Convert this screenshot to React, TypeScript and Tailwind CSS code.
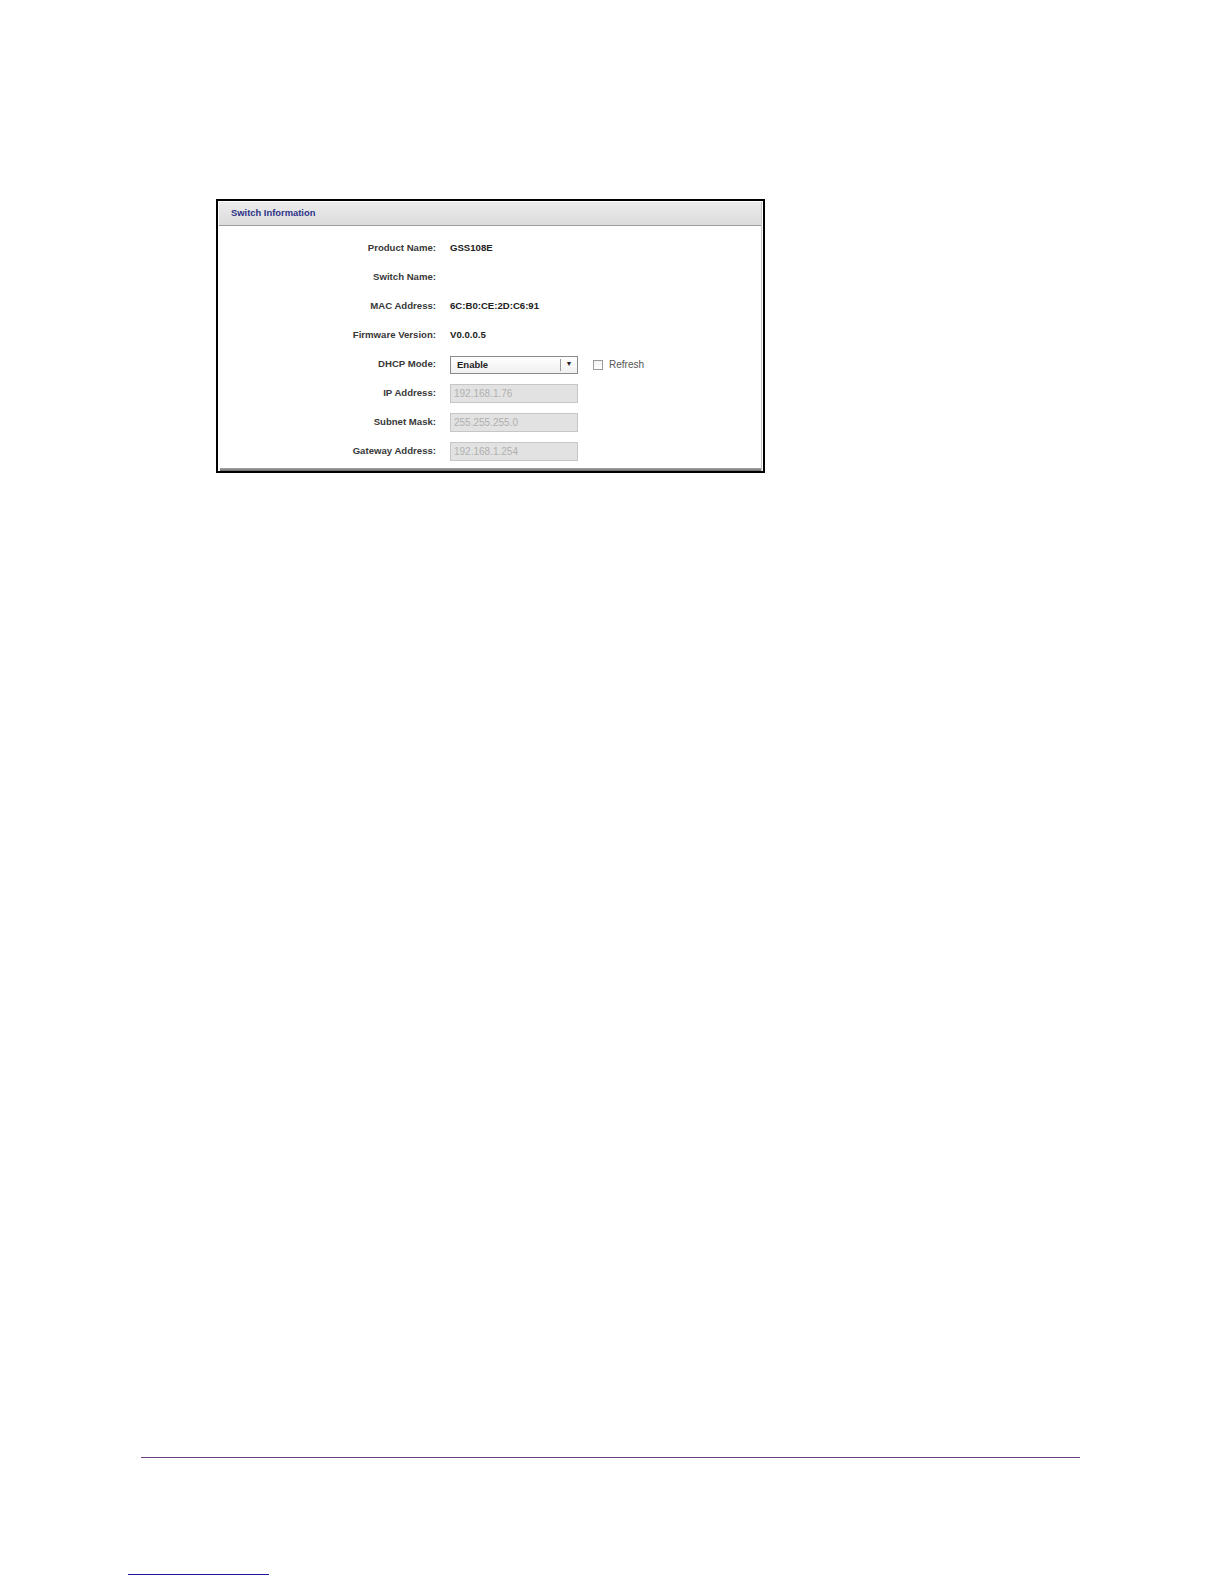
const font = { fontFamily: '"Liberation Sans", Arial, sans-serif' };

const rows: { label: string; value?: string; kind: "text" | "select" | "input" }[] = [
  { label: "Product Name:", value: "GSS108E", kind: "text" },
  { label: "Switch Name:", value: "", kind: "text" },
  { label: "MAC Address:", value: "6C:B0:CE:2D:C6:91", kind: "text" },
  { label: "Firmware Version:", value: "V0.0.0.5", kind: "text" },
  { label: "DHCP Mode:", value: "Enable", kind: "select" },
  { label: "IP Address:", value: "192.168.1.76", kind: "input" },
  { label: "Subnet Mask:", value: "255.255.255.0", kind: "input" },
  { label: "Gateway Address:", value: "192.168.1.254", kind: "input" },
];

function DhcpSelect({ value }: { value: string }) {
  return (
    <div className="flex items-center gap-[15px]">
      <div className="flex h-[18px] w-[128px] items-stretch border border-[#8a8a8a] bg-gradient-to-b from-white to-[#f0f0f0]">
        <span className="flex flex-1 items-center pl-[6px] pt-px text-[9.5px] font-bold text-[#222]">{value}</span>
        <span className="my-[2px] w-px bg-[#9a9a9a]" />
        <span className="flex w-[16px] items-center justify-center text-[7px] text-[#222]">▼</span>
      </div>
      <div className="flex items-center gap-[6px]">
        <span className="h-[10px] w-[10px] border border-[#9a9a9a] bg-gradient-to-b from-[#f4f4f4] to-white" />
        <span className="text-[10px] text-[#555]">Refresh</span>
      </div>
    </div>
  );
}

function DisabledInput({ value }: { value: string }) {
  return (
    <div className="flex h-[19px] w-[128px] items-center border border-[#c6c6c6] bg-[#e2e2e2] pl-[3px] text-[10px] text-[#b0b0b0]">
      {value}
    </div>
  );
}

export default function App() {
  return (
    <div className="h-[1584px] w-[1224px] bg-white" style={font}>
      <div className="pl-[216px] pt-[199px]">
        {/* Switch Information panel */}
        <div className="w-[549px] border-2 border-black bg-white">
          <div className="mt-px mr-px border-r border-[#c4c4c4]">
            <div className="ml-px flex h-[24px] items-center border-b border-[#9c9c9c] bg-gradient-to-b from-[#ececec] to-[#dcdcdc] pl-[12px]">
              <span className="text-[9.4px] font-bold text-[#2c3287]">Switch Information</span>
            </div>
            <div className="pt-[8px] pb-[2px]">
              {rows.map((r) => (
                <div key={r.label} className="grid h-[29px] grid-cols-[218px_1fr] items-center gap-[14px]">
                  <span className="text-right text-[9.6px] font-bold text-[#383838]">{r.label}</span>
                  {r.kind === "text" && <span className="text-[9.6px] font-bold text-[#222]">{r.value}</span>}
                  {r.kind === "select" && <DhcpSelect value={r.value || ""} />}
                  {r.kind === "input" && <DisabledInput value={r.value || ""} />}
                </div>
              ))}
            </div>
            <div className="ml-[2px] h-[3px] bg-gradient-to-b from-[#a8a8a8] to-[#6c6c6c]" />
          </div>
        </div>
      </div>

      {/* footer rule */}
      <div className="ml-[141px] mt-[984px] h-px w-[939px] bg-[#6e3f80]" />
      <div className="ml-[128px] mt-[116px] h-px w-[141px] bg-[#1c1c9a]" />
    </div>
  );
}
